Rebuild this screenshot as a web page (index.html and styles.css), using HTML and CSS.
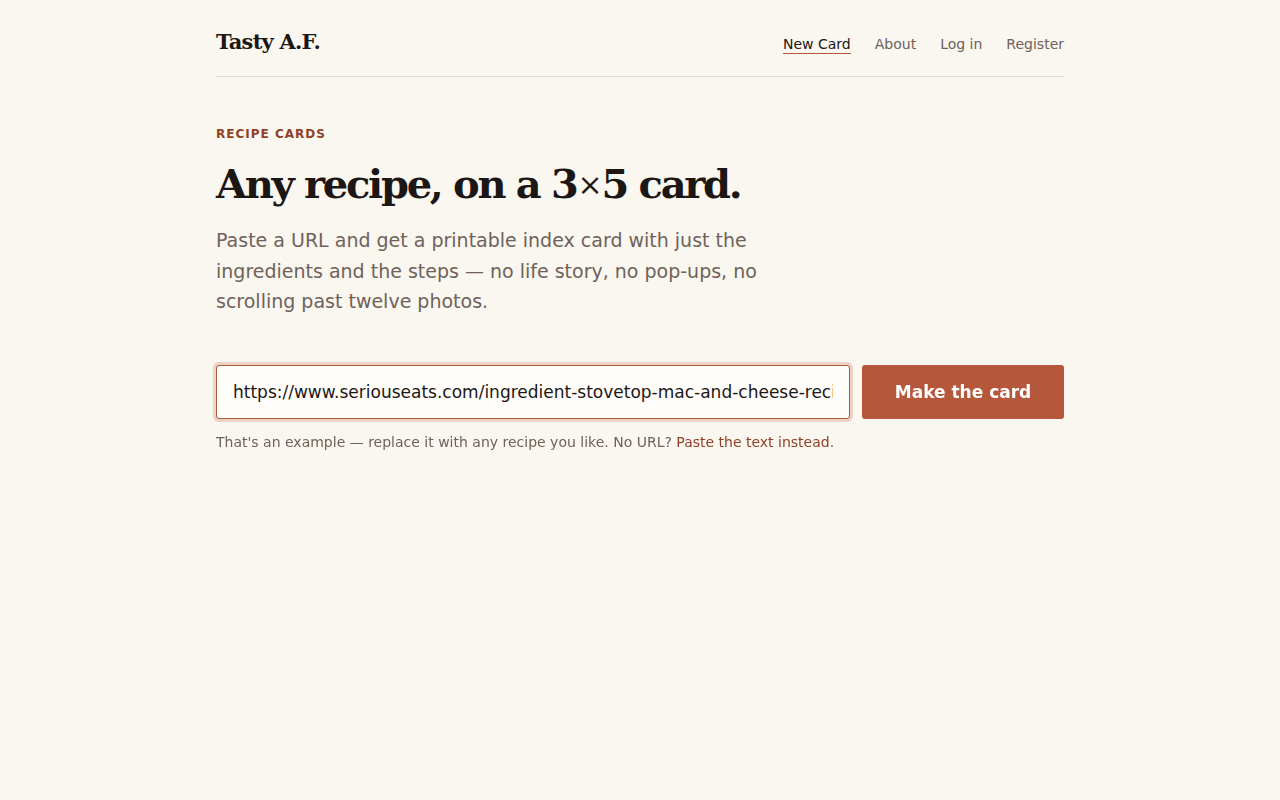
FILE: index.html
```html
<!DOCTYPE html>
<html>
<head>
    <title>Tasty A.F. — New Card</title>
    <link rel="stylesheet" href="styles.css">
</head>
<body>
    <div class="page">
        <header class="site-header">
            <a class="logo" href="#">Tasty A.F.</a>
            <nav class="nav">
                <a class="nav-link active" href="#">New Card</a>
                <a class="nav-link" href="#">About</a>
                <a class="nav-link" href="#">Log in</a>
                <a class="nav-link" href="#">Register</a>
            </nav>
        </header>

        <main class="hero">
            <div class="eyebrow">Recipe Cards</div>
            <h1 class="headline">Any recipe, on a 3<span class="times">×</span>5 card.</h1>
            <p class="lede">Paste a URL and get a printable index card with just the ingredients and the steps — no life story, no pop-ups, no scrolling past twelve photos.</p>

            <form class="url-form">
                <input class="url-input" type="text" value="https://www.seriouseats.com/ingredient-stovetop-mac-and-cheese-recipe" autofocus>
                <button class="make-button" type="submit">Make the card</button>
            </form>
            <p class="hint">That's an example — replace it with any recipe you like. No URL? <a href="#">Paste the text instead</a>.</p>
        </main>
    </div>
</body>
</html>
```

FILE: styles.css
```css
:root {
    --bg-color: #faf6f0;
    --text-color: #1c1714;
    --muted-color: #6e625a;
    --border-color: #e4ddd4;
    --accent: #b5573a;
    --accent-dark: #8f4226;
}

body {
    margin: 0;
    padding: 0;
    background: var(--bg-color);
    color: var(--text-color);
    font-family: "DejaVu Sans", sans-serif;
}

.page {
    width: 848px;
    margin: 0 auto;
}

/* Header */
.site-header {
    display: flex;
    align-items: center;
    justify-content: space-between;
    height: 76px;
    border-bottom: 1px solid var(--border-color);
}

.logo {
    font-family: "DejaVu Serif", serif;
    font-weight: 700;
    font-size: 21px;
    letter-spacing: -0.8px;
    color: var(--text-color);
    text-decoration: none;
    margin-top: 7px;
}

.nav {
    display: flex;
    gap: 24px;
    margin-top: 14px;
}

.nav-link {
    font-size: 14px;
    color: var(--muted-color);
    text-decoration: none;
    padding-bottom: 1px;
}

.nav-link.active {
    color: var(--text-color);
    border-bottom: 1px solid var(--accent);
}

/* Hero */
.hero {
    padding-top: 50px;
}

.eyebrow {
    font-size: 12px;
    font-weight: 700;
    letter-spacing: 1px;
    text-transform: uppercase;
    color: var(--accent-dark);
}

.headline {
    font-family: "DejaVu Serif", serif;
    font-weight: 700;
    font-size: 40px;
    letter-spacing: -2.3px;
    line-height: 1.2;
    margin: 19px 0 17px;
}

.headline .times {
    font-weight: 400;
    font-size: 30px;
    vertical-align: 3px;
    margin: 0 1px;
}

.lede {
    font-size: 19px;
    line-height: 30.5px;
    color: var(--muted-color);
    max-width: 560px;
    margin: 0;
}

/* Form */
.url-form {
    display: flex;
    gap: 12px;
    margin-top: 48px;
}

.url-input {
    flex: 1;
    height: 54px;
    box-sizing: border-box;
    padding: 0 16px;
    font-family: "DejaVu Sans", sans-serif;
    font-size: 17px;
    color: var(--text-color);
    background: #fffdfa;
    border: 1px solid #a9583c;
    border-radius: 3px;
    box-shadow: 0 0 0 3px rgba(181, 87, 58, 0.22);
    outline: none;
}

.make-button {
    width: 202px;
    height: 54px;
    border: none;
    border-radius: 3px;
    background: var(--accent);
    color: #fff;
    font-family: "DejaVu Sans", sans-serif;
    font-size: 17px;
    font-weight: 700;
    cursor: pointer;
}

.hint {
    font-size: 14px;
    color: var(--muted-color);
    margin: 15px 0 0;
}

.hint a {
    color: var(--accent-dark);
    text-decoration: none;
    border-bottom: 1px solid #d9b5a6;
}
```
